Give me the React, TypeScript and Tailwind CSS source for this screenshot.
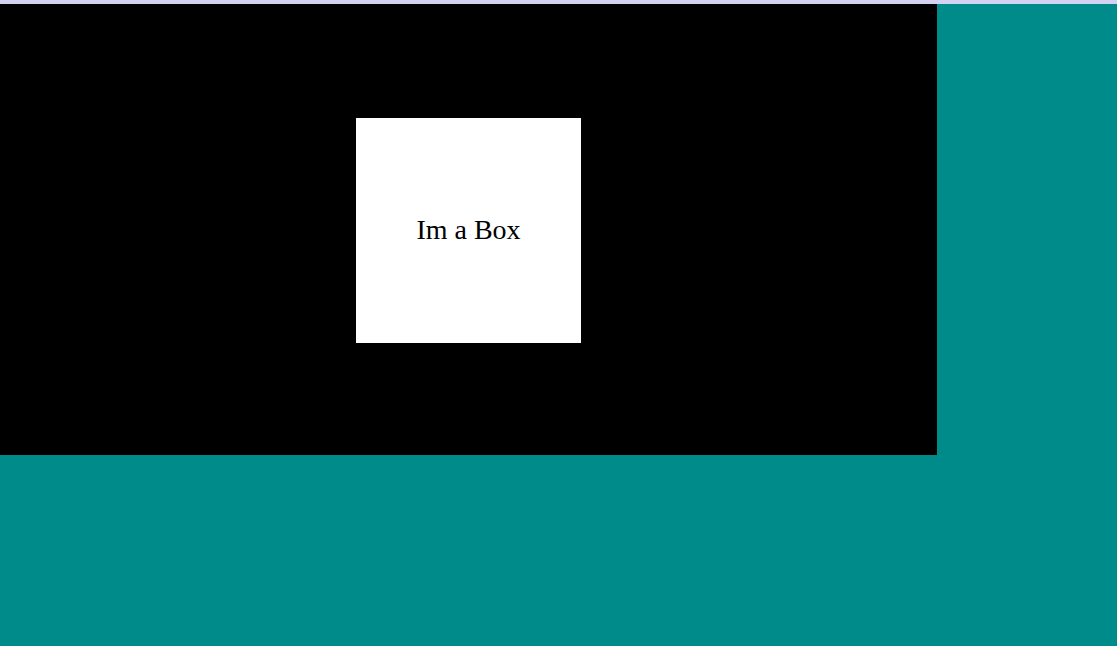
export default function App() {
  return (
    <div className="w-[1117px] h-[646px] bg-[#008b8b] flex flex-col overflow-hidden">
      <div className="h-[4px] w-full bg-[#d3d3f1] shrink-0" />
      <div className="w-[937px] h-[451px] bg-black flex justify-center pt-[114px] shrink-0">
        <div className="w-[225px] h-[225px] bg-white flex items-center justify-center pb-[2px]">
          <span className="text-[28px] text-black" style={{ fontFamily: '"Liberation Serif", serif' }}>Im a Box</span>
        </div>
      </div>
    </div>
  );
}
